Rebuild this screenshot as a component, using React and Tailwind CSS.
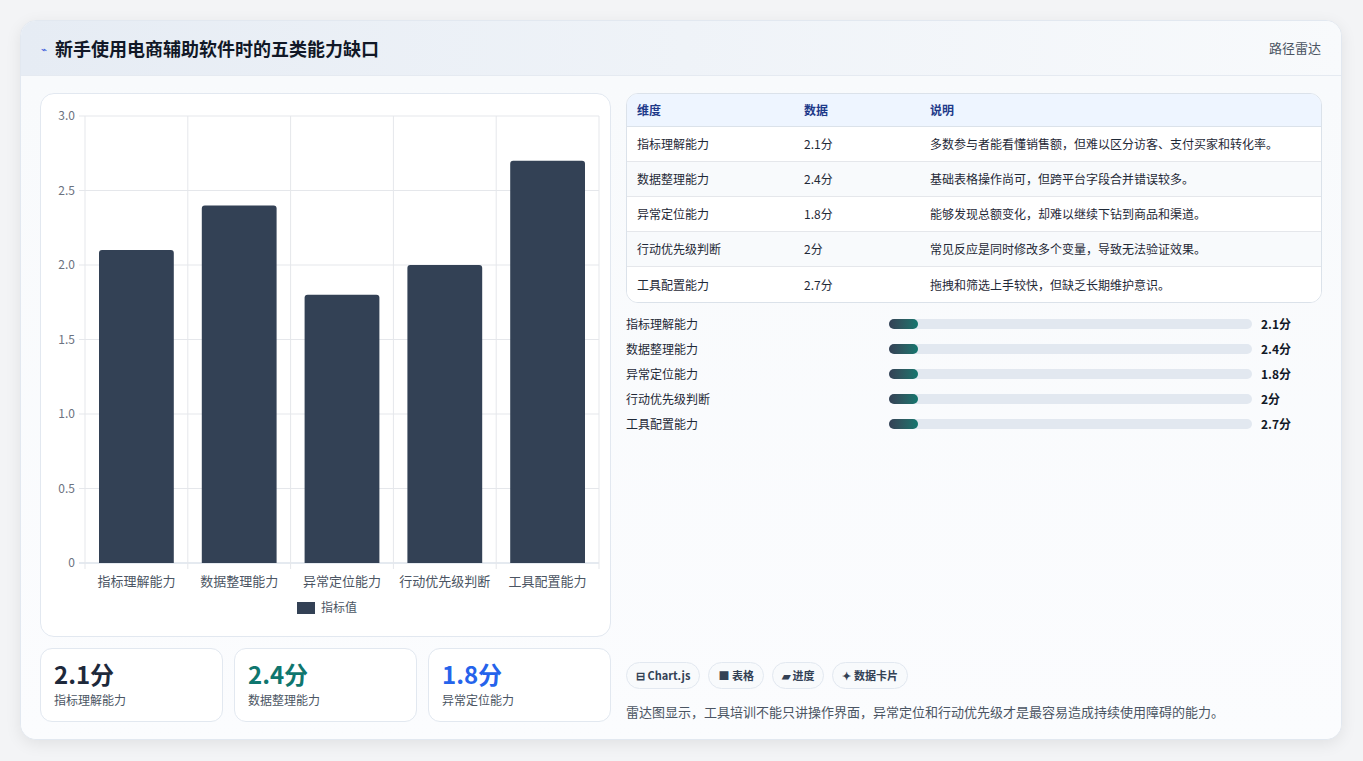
import React from "react";

const data = [
  ["指标理解能力", 2.1, "多数参与者能看懂销售额，但难以区分访客、支付买家和转化率。"],
  ["数据整理能力", 2.4, "基础表格操作尚可，但跨平台字段合并错误较多。"],
  ["异常定位能力", 1.8, "能够发现总额变化，却难以继续下钻到商品和渠道。"],
  ["行动优先级判断", 2, "常见反应是同时修改多个变量，导致无法验证效果。"],
  ["工具配置能力", 2.7, "拖拽和筛选上手较快，但缺乏长期维护意识。"],
];
const font = { fontFamily: '"Noto Sans CJK SC", "Noto Sans", sans-serif' };

function Chart() {
  const x0 = 44, x1 = 558, yTop = 22, yBot = 469;
  const h = yBot - yTop;
  const cw = (x1 - x0) / 5;
  return (
    <svg width="570" height="544" className="block">
      {[0, 0.5, 1, 1.5, 2, 2.5, 3].map((v) => {
        const y = yBot - (v / 3) * h;
        return (
          <g key={v}>
            <line x1={x0 - 6} x2={x1} y1={y} y2={y} stroke={v === 0 ? "#cbd5e1" : "#e5e7eb"} />
            <text x={x0 - 10} y={y + 4} textAnchor="end" fontSize="12" fill="#6b7280" style={font}>
              {v === 0 ? "0" : v.toFixed(1)}
            </text>
          </g>
        );
      })}
      {[0, 1, 2, 3, 4, 5].map((i) => (
        <line key={i} x1={x0 + i * cw} x2={x0 + i * cw} y1={yTop} y2={yBot + 6} stroke="#e5e7eb" />
      ))}
      {data.map(([n, v], i) => {
        const bh = (v / 3) * h;
        const bx = x0 + i * cw + 14;
        return (
          <g key={n}>
            <path
              d={`M${bx} ${yBot} V${yBot - bh + 3} Q${bx} ${yBot - bh} ${bx + 3} ${yBot - bh} H${bx + cw - 31} Q${bx + cw - 28} ${yBot - bh} ${bx + cw - 28} ${yBot - bh + 3} V${yBot} Z`}
              fill="#334155"
            />
            <text x={x0 + i * cw + cw / 2} y={yBot + 23} textAnchor="middle" fontSize="13" fill="#4b5563" style={font}>
              {n}
            </text>
          </g>
        );
      })}
      <rect x="256" y="508" width="18" height="12" fill="#334155" />
      <text x="280" y="518" fontSize="12" fill="#4b5563" style={font}>指标值</text>
    </svg>
  );
}

export default function App() {
  return (
    <div className="w-[1363px] h-[761px] bg-[#f3f4f6] pt-[20px] px-[20px]" style={font}>
      <div className="w-[1322px] h-[720px] rounded-[16px] bg-white shadow-[0_4px_16px_rgba(0,0,0,0.08)] border border-[#e2e8f0] overflow-hidden flex flex-col">
        <div className="h-[55px] flex items-center justify-between px-[20px] bg-gradient-to-r from-[#e6ecf4] to-[#f8fafc] border-b border-[#e5eaf1]">
          <div className="flex items-center gap-[8px]">
            <span className="text-[#3b5bdb] text-[10px]">⌁</span>
            <span className="text-[18px] font-bold text-[#111827]">新手使用电商辅助软件时的五类能力缺口</span>
          </div>
          <span className="text-[13px] text-[#4b5563]">路径雷达</span>
        </div>
        <div className="flex-1 flex gap-[15px] px-[19px] pt-[17px] bg-gradient-to-b from-[#f8fafc] to-[#fbfcfe]">
          <div className="w-[571px] flex flex-col gap-[11px]">
            <div className="h-[544px] rounded-[14px] border border-[#e2e8f0] bg-white overflow-hidden">
              <Chart />
            </div>
            <div className="flex gap-[11px]">
              {[["2.1分", "text-[#1e293b]"], ["2.4分", "text-[#0f766e]"], ["1.8分", "text-[#2563eb]"]].map(([v, c], i) => (
                <div key={v} className="w-[183px] h-[74px] rounded-[12px] border border-[#e2e8f0] bg-white px-[13px] pt-[10px]">
                  <div className={`text-[24px] font-bold leading-[30px] ${c}`}>{v}</div>
                  <div className="text-[12px] text-[#4b5563] mt-[2px]">{data[i][0]}</div>
                </div>
              ))}
            </div>
          </div>
          <div className="flex-1 flex flex-col">
            <div className="rounded-[12px] border border-[#dbe2ea] overflow-hidden bg-white">
              <div className="h-[33px] flex items-center bg-[#eef5ff] border-b border-[#dbe2ea] text-[12px] font-semibold text-[#1e3a8a]">
                <span className="w-[177px] pl-[10px]">维度</span>
                <span className="w-[126px]">数据</span>
                <span>说明</span>
              </div>
              {data.map(([n, v, d], i) => (
                <div key={n} className={`h-[35px] flex items-center text-[12px] text-[#1f2937] ${i < 4 ? "border-b border-[#e5e7eb]" : ""} ${i % 2 ? "bg-[#f8fafc]" : "bg-white"}`}>
                  <span className="w-[177px] pl-[10px]">{n}</span>
                  <span className="w-[126px]">{v}分</span>
                  <span>{d}</span>
                </div>
              ))}
            </div>
            <div className="flex flex-col mt-[8px]">
              {data.map(([n, v]) => (
                <div key={n} className="h-[25px] flex items-center text-[12px]">
                  <span className="w-[263px] text-[#1f2937]">{n}</span>
                  <div className="w-[363px] h-[10px] rounded-full bg-[#e2e8f0]">
                    <div className="w-[29px] h-[10px] rounded-full bg-gradient-to-r from-[#334155] to-[#0f766e]" />
                  </div>
                  <span className="ml-[9px] font-bold text-[#111827]">{v}分</span>
                </div>
              ))}
            </div>
            <div className="flex-1" />
            <div className="flex gap-[8px] mb-[13px]">
              {["⊟ Chart.js", "■ 表格", "▰ 进度", "✦ 数据卡片"].map((t) => (
                <span key={t} className="h-[27px] px-[9px] flex items-center rounded-full border border-[#e2e8f0] bg-[#f8fafc] text-[11px] font-semibold text-[#334155]">{t}</span>
              ))}
            </div>
            <div className="text-[13px] text-[#4b5563] mb-[18px]">雷达图显示，工具培训不能只讲操作界面，异常定位和行动优先级才是最容易造成持续使用障碍的能力。</div>
          </div>
        </div>
      </div>
    </div>
  );
}
